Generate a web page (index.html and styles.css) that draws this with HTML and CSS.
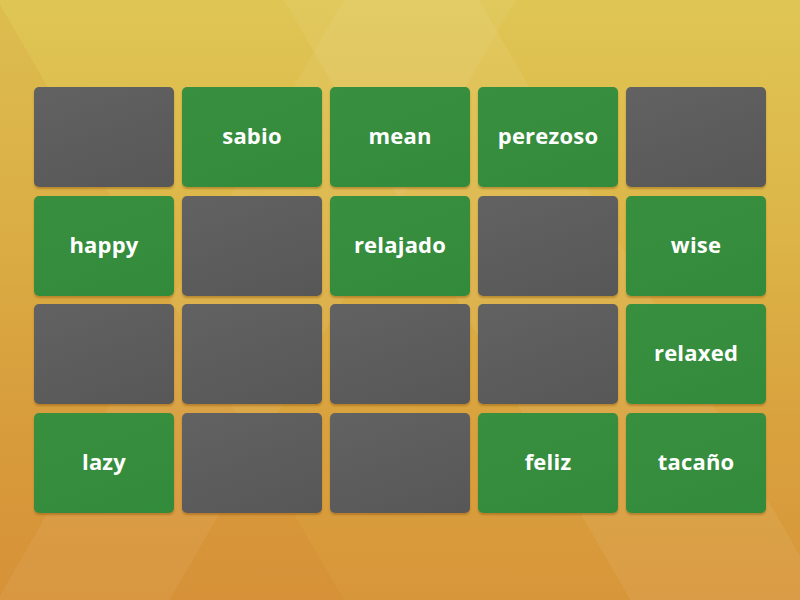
FILE: index.html
```html
<!DOCTYPE html>
<html>
<head>
<meta charset="utf-8">
<link rel="stylesheet" href="styles.css">
</head>
<body>
<div class="stage">
  <div class="board">
    <div class="card back"></div>
    <div class="card face">sabio</div>
    <div class="card face">mean</div>
    <div class="card face">perezoso</div>
    <div class="card back"></div>

    <div class="card face">happy</div>
    <div class="card back"></div>
    <div class="card face">relajado</div>
    <div class="card back"></div>
    <div class="card face">wise</div>

    <div class="card back"></div>
    <div class="card back"></div>
    <div class="card back"></div>
    <div class="card back"></div>
    <div class="card face">relaxed</div>

    <div class="card face">lazy</div>
    <div class="card back"></div>
    <div class="card back"></div>
    <div class="card face">feliz</div>
    <div class="card face">tacaño</div>
  </div>
</div>
</body>
</html>
```

FILE: styles.css
```css
html, body {
  margin: 0;
  padding: 0;
}
.stage {
  width: 800px;
  height: 600px;
  box-sizing: border-box;
  padding: 87px 0 0 34px;
  background:
    linear-gradient(120deg, rgba(255,255,255,0) 0 30%, rgba(255,255,255,0.05) 30% 45%, rgba(255,255,255,0) 45% 100%),
    linear-gradient(60deg, rgba(255,255,255,0) 0 55%, rgba(255,255,255,0.06) 55% 72%, rgba(255,255,255,0) 72% 100%),
    linear-gradient(240deg, rgba(200,90,30,0) 0 70%, rgba(200,90,30,0.08) 70% 100%),
    linear-gradient(to bottom, #dfc654 0%, #dcb447 40%, #d9a23e 70%, #d8963a 100%);
  font-family: "Open Sans", "Liberation Sans", sans-serif;
}
.board {
  display: grid;
  grid-template-columns: repeat(5, 140px);
  grid-template-rows: repeat(4, 100px);
  column-gap: 8px;
  row-gap: 8.67px;
}
.card {
  box-sizing: border-box;
  padding-bottom: 4px;
  border-radius: 5px;
  box-shadow: 0 2px 2px rgba(120, 70, 0, 0.35);
  display: flex;
  align-items: center;
  justify-content: center;
  color: #ffffff;
  font-size: 22px;
  font-weight: 700;
  letter-spacing: 0.2px;
}
.back {
  background: linear-gradient(160deg, #626262, #575757);
}
.face {
  background: linear-gradient(160deg, #38903f, #328a3b);
}
```
